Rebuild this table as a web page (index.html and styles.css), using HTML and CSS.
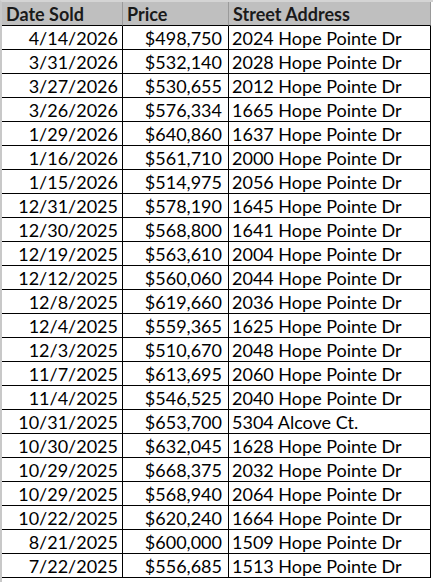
FILE: index.html
```html
<!DOCTYPE html>
<html lang="en">
<head>
<meta charset="utf-8">
<title>Home Sales</title>
<link rel="stylesheet" href="styles.css">
</head>
<body>
<div class="sheet">
  <div class="grid">
    <div class="cell head">Date Sold</div>
    <div class="cell head">Price</div>
    <div class="cell head">Street Address</div>

    <div class="cell num">4/14/2026</div><div class="cell num price">$498,750</div><div class="cell txt">2024 Hope Pointe Dr</div>
    <div class="cell num">3/31/2026</div><div class="cell num price">$532,140</div><div class="cell txt">2028 Hope Pointe Dr</div>
    <div class="cell num">3/27/2026</div><div class="cell num price">$530,655</div><div class="cell txt">2012 Hope Pointe Dr</div>
    <div class="cell num">3/26/2026</div><div class="cell num price">$576,334</div><div class="cell txt">1665 Hope Pointe Dr</div>
    <div class="cell num">1/29/2026</div><div class="cell num price">$640,860</div><div class="cell txt">1637 Hope Pointe Dr</div>
    <div class="cell num">1/16/2026</div><div class="cell num price">$561,710</div><div class="cell txt">2000 Hope Pointe Dr</div>
    <div class="cell num">1/15/2026</div><div class="cell num price">$514,975</div><div class="cell txt">2056 Hope Pointe Dr</div>
    <div class="cell num">12/31/2025</div><div class="cell num price">$578,190</div><div class="cell txt">1645 Hope Pointe Dr</div>
    <div class="cell num">12/30/2025</div><div class="cell num price">$568,800</div><div class="cell txt">1641 Hope Pointe Dr</div>
    <div class="cell num">12/19/2025</div><div class="cell num price">$563,610</div><div class="cell txt">2004 Hope Pointe Dr</div>
    <div class="cell num">12/12/2025</div><div class="cell num price">$560,060</div><div class="cell txt">2044 Hope Pointe Dr</div>
    <div class="cell num">12/8/2025</div><div class="cell num price">$619,660</div><div class="cell txt">2036 Hope Pointe Dr</div>
    <div class="cell num">12/4/2025</div><div class="cell num price">$559,365</div><div class="cell txt">1625 Hope Pointe Dr</div>
    <div class="cell num">12/3/2025</div><div class="cell num price">$510,670</div><div class="cell txt">2048 Hope Pointe Dr</div>
    <div class="cell num">11/7/2025</div><div class="cell num price">$613,695</div><div class="cell txt">2060 Hope Pointe Dr</div>
    <div class="cell num">11/4/2025</div><div class="cell num price">$546,525</div><div class="cell txt">2040 Hope Pointe Dr</div>
    <div class="cell num">10/31/2025</div><div class="cell num price">$653,700</div><div class="cell txt">5304 Alcove Ct.</div>
    <div class="cell num">10/30/2025</div><div class="cell num price">$632,045</div><div class="cell txt">1628 Hope Pointe Dr</div>
    <div class="cell num">10/29/2025</div><div class="cell num price">$668,375</div><div class="cell txt">2032 Hope Pointe Dr</div>
    <div class="cell num">10/29/2025</div><div class="cell num price">$568,940</div><div class="cell txt">2064 Hope Pointe Dr</div>
    <div class="cell num">10/22/2025</div><div class="cell num price">$620,240</div><div class="cell txt">1664 Hope Pointe Dr</div>
    <div class="cell num">8/21/2025</div><div class="cell num price">$600,000</div><div class="cell txt">1509 Hope Pointe Dr</div>
    <div class="cell num">7/22/2025</div><div class="cell num price">$556,685</div><div class="cell txt">1513 Hope Pointe Dr</div>
  </div>
</div>
</body>
</html>
```

FILE: styles.css
```css
* { box-sizing: border-box; }

html, body {
  margin: 0;
  padding: 0;
  background: #ffffff;
}

body {
  font-family: Lato, "Liberation Sans", sans-serif;
  font-size: 18px;
  color: #000000;
}

.sheet {
  width: 433px;
  height: 582px;
  overflow: hidden;
  border-top: 2px solid #d4d4d4;
  border-left: 2px solid #c8c8c8;
}

.grid {
  display: grid;
  grid-template-columns: 121px 106px 202px;
  grid-auto-rows: 24px;
}

.cell {
  border-right: 1px solid #000000;
  border-bottom: 1px solid #000000;
  padding-top: 1px;
  line-height: 22px;
  white-space: nowrap;
  overflow: hidden;
}

.head {
  height: 24px;
  background: #bfbfbf;
  border-right-color: #9a9a9a;
  font-weight: 700;
  color: #1a1a1a;
  padding-left: 4px;
}

.num {
  text-align: right;
  padding-right: 4px;
}

.price {
  padding-right: 6px;
}

.txt {
  padding-left: 3px;
}
```
